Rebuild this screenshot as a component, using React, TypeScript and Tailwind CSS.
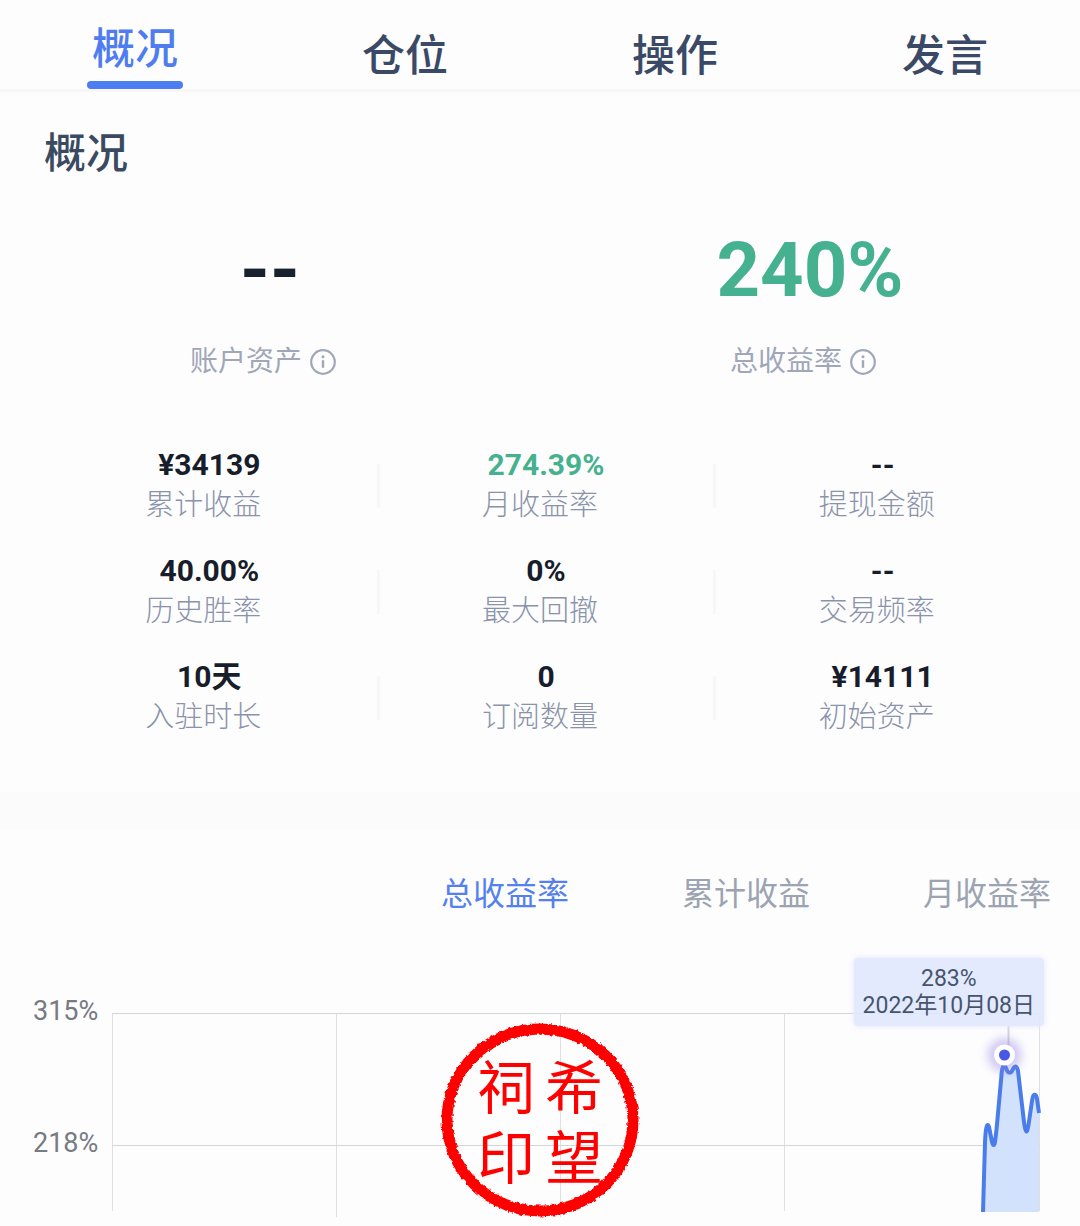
import { useState } from "react";
import clsx from "clsx";

const tabs = ["概况", "仓位", "操作", "发言"];

const chartTabs = ["总收益率", "累计收益", "月收益率"];

const stats = [
  { value: "¥34139", label: "累计收益" },
  { value: "274.39%", label: "月收益率", up: true },
  { value: "--", label: "提现金额" },
  { value: "40.00%", label: "历史胜率" },
  { value: "0%", label: "最大回撤" },
  { value: "--", label: "交易频率" },
  { value: "10天", label: "入驻时长" },
  { value: "0", label: "订阅数量" },
  { value: "¥14111", label: "初始资产" },
];

const curve =
  "M871 199 L873 130 C873.5 116 875 108 877 114 L880 129 C881 133 882.5 133 883 129 C884.5 118 885 112 885.5 106 L889.5 62 C890 54 892 50 894 55 C896 61 899 61 901 56 C903 52 905 53 906 58 L912 109 C913.5 121 915 121 916.5 112 L920 88 C921 80 924 80 925 86 L927 100";

function InfoIcon() {
  return (
    <svg viewBox="0 0 26 26" className="h-[26px] w-[26px]" fill="none" aria-hidden="true">
      <circle cx="13" cy="13" r="11.8" stroke="currentColor" strokeWidth="2.2" />
      <circle cx="13" cy="7.8" r="1.5" fill="currentColor" />
      <path d="M13 11.2V18.8" stroke="currentColor" strokeWidth="2.4" />
    </svg>
  );
}

function TabBar() {
  const [active, setActive] = useState(0);

  return (
    <nav className="grid h-[92px] grid-cols-4 border-b-3 border-[#f7f7f8]">
      {tabs.map((tab, i) => (
        <button
          key={tab}
          type="button"
          onClick={() => setActive(i)}
          className={clsx(
            "flex flex-col items-center text-[43px] leading-[64px] font-medium",
            i === active ? "pt-[17px] text-[#4f7df0]" : "pt-6 text-[#3a4a66]"
          )}
        >
          {tab}
          {i === active && <span className="h-2 w-24 rounded-full bg-[#4d7df2]" />}
        </button>
      ))}
    </nav>
  );
}

function Overview() {
  return (
    <section className="pb-[54px]">
      <h1 className="px-11 pt-[30px] text-[42px] leading-[64px] font-medium text-[#3a4a60]">
        概况
      </h1>

      <div className="mt-9 grid grid-cols-2 text-center">
        <div>
          <p className="text-[76px] leading-[96px] font-bold text-[#16232f]">--</p>
          <p className="mt-6 flex items-center justify-center gap-2 pr-[14px] text-[28px] leading-10 text-[#a0a7b9]">
            账户资产
            <InfoIcon />
          </p>
        </div>
        <div>
          <p className="text-[76px] leading-[96px] font-bold text-[#46b18e]">240%</p>
          <p className="mt-6 flex items-center justify-center gap-2 pr-[14px] text-[28px] leading-10 text-[#a0a7b9]">
            总收益率
            <InfoIcon />
          </p>
        </div>
      </div>

      <div className="mt-16 grid grid-cols-3 gap-y-[26px] px-[35px] text-center">
        {stats.map((stat, i) => (
          <div key={stat.label} className="flex items-center">
            <div className="flex-1">
              <p
                className={clsx(
                  "pl-3 text-[30px] leading-[38px] font-bold",
                  stat.up ? "text-[#46b18e]" : "text-[#171d2b]"
                )}
              >
                {stat.value}
              </p>
              <p className="text-[29px] leading-[42px] font-light text-[#8a93aa]">{stat.label}</p>
            </div>
            {i % 3 !== 2 && <span className="-mr-2 ml-[5px] h-11 w-[3px] bg-[#f7f7fa]" />}
          </div>
        ))}
      </div>
    </section>
  );
}

function Stamp() {
  return (
    <div className="absolute top-[62px] left-1/2 h-[200px] w-[200px] -translate-x-1/2">
      <svg viewBox="0 0 200 200" className="absolute inset-0 h-full w-full" aria-hidden="true">
        <filter id="rough" x="-5%" y="-5%" width="110%" height="110%">
          <feTurbulence type="fractalNoise" baseFrequency="0.3" numOctaves="3" seed="7" />
          <feDisplacementMap
            in="SourceGraphic"
            scale="4"
            xChannelSelector="R"
            yChannelSelector="G"
          />
        </filter>
        <ellipse
          cx="100"
          cy="100"
          rx="93"
          ry="91"
          fill="none"
          stroke="#fe0000"
          strokeWidth="11"
          filter="url(#rough)"
        />
      </svg>
      <div className="relative grid grid-cols-[68px_68px] justify-center pt-[34px] text-center text-[58px] leading-[70px] text-[#fe0000]">
        <span>祠</span>
        <span>希</span>
        <span>印</span>
        <span>望</span>
      </div>
    </div>
  );
}

function ProfitChart() {
  const [active, setActive] = useState(0);

  return (
    <section className="border-t-[38px] border-[#fbfbfc] pt-10">
      <div className="flex justify-end gap-[113px] pr-[29px]">
        {chartTabs.map((tab, i) => (
          <button
            key={tab}
            type="button"
            onClick={() => setActive(i)}
            className={clsx(
              "text-[32px] leading-12",
              i === active ? "text-[#5581ee]" : "text-[#9ca3b1]"
            )}
          >
            {tab}
          </button>
        ))}
      </div>

      <div className="relative mt-10 flex pt-[55px] pr-10">
        <div className="-mt-[22px] flex w-28 shrink-0 flex-col gap-[92px] pl-[33px] text-[27px] leading-10 text-[#767a82]">
          <span>315%</span>
          <span>218%</span>
        </div>
        <svg viewBox="0 0 928 200" className="w-full min-w-0 flex-1 overflow-visible" fill="none">
          <path d="M0.5 0V198M224.5 0V204M448.5 0V204M672.5 0V198M927.5 0V198" stroke="#dfdfe2" />
          <path d="M0 0.5H928M0 132.5H928" stroke="#d5d5d8" />
          <path d={`${curve}V199H871Z`} fill="#d3e2fc" />
          <path d={curve} stroke="#4a7dea" strokeWidth="4" strokeLinejoin="round" />
          <path d="M896.5 12V34" stroke="#d5d5da" strokeWidth="2" />
          <circle cx="892.5" cy="42" r="17" fill="#8f7be0" opacity="0.4" className="blur-[5px]" />
          <circle cx="892.5" cy="42" r="10.5" fill="#fff" />
          <circle cx="892.5" cy="42" r="5.5" fill="#4759e2" />
        </svg>

        <div className="absolute top-0 right-9 rounded-sm bg-[#e0e8fd]/90 px-[9px] py-[7px] text-center text-[23px] leading-[27px] text-[#46556c] shadow-[0_0_6px_#e6e3fb]">
          <p>283%</p>
          <p>2022年10月08日</p>
        </div>
        <Stamp />
      </div>
    </section>
  );
}

export default function App() {
  return (
    <main className="min-h-screen bg-[#fdfdfe] font-['Roboto','Noto_Sans_CJK_SC',sans-serif]">
      <TabBar />
      <Overview />
      <ProfitChart />
    </main>
  );
}
